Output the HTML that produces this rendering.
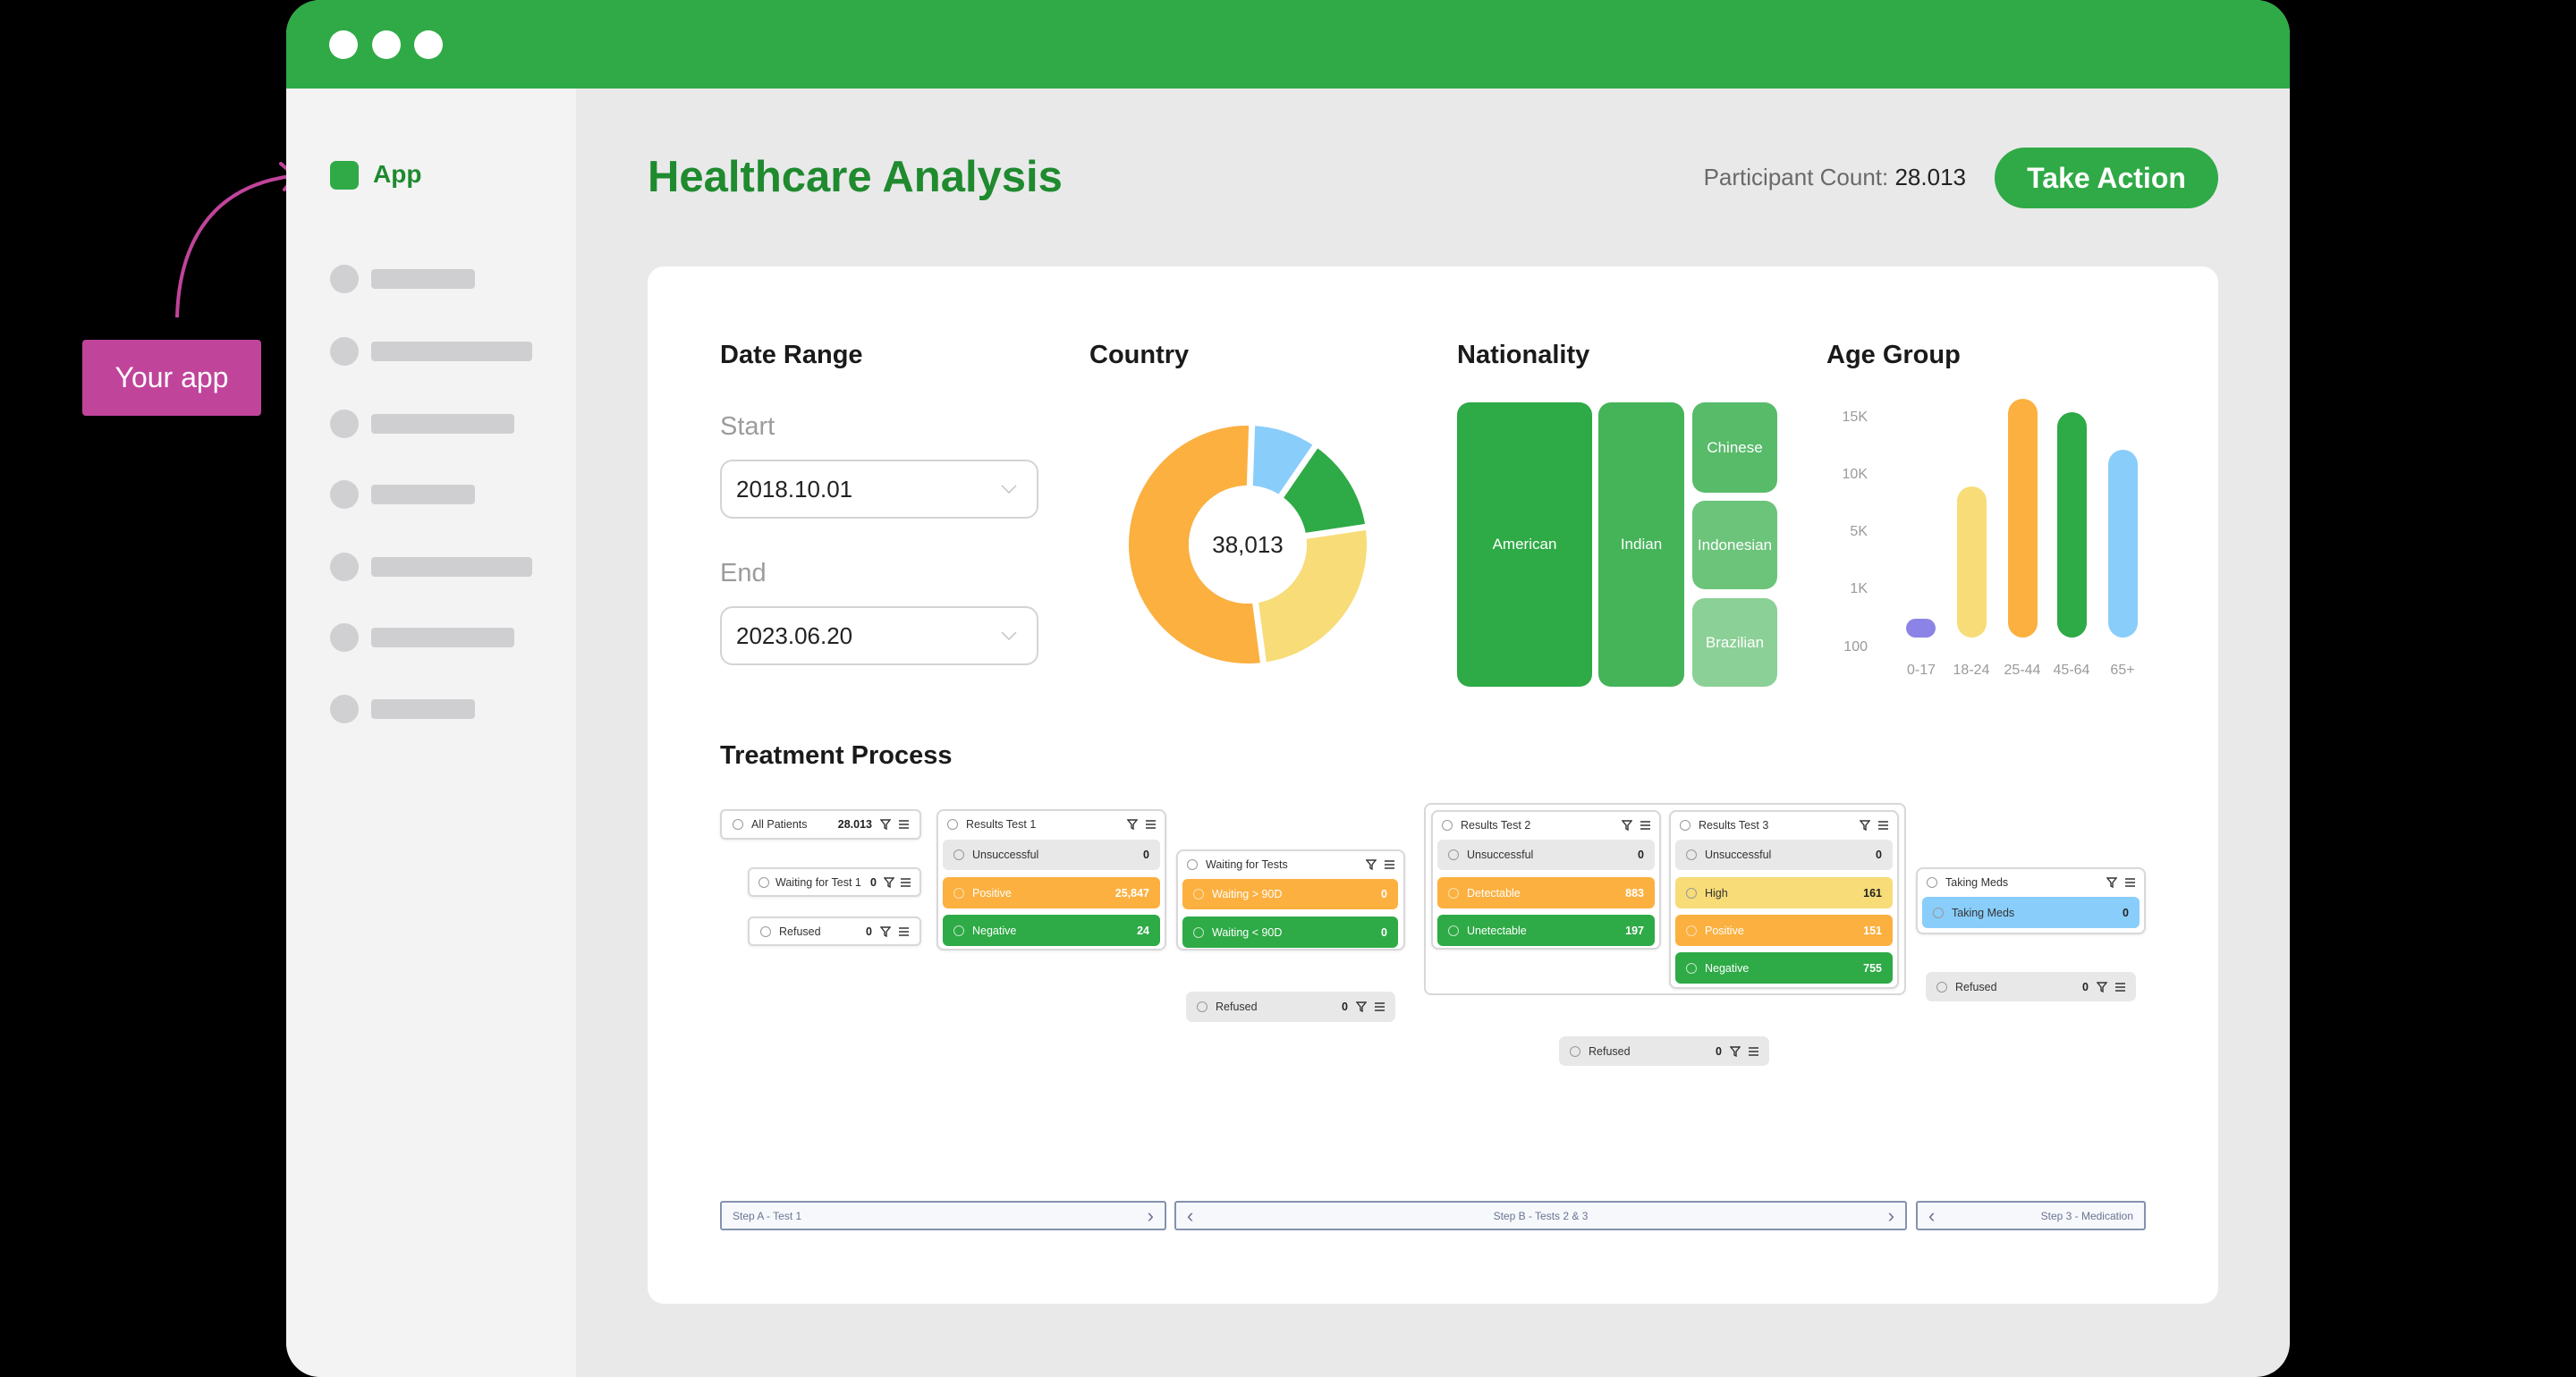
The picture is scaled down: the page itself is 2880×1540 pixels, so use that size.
<!DOCTYPE html>
<html><head><meta charset="utf-8">
<style>
*{margin:0;padding:0}
body{width:2880px;height:1540px;background:#000;position:relative;overflow:hidden;font-family:"Liberation Sans",sans-serif}
.a{position:absolute}
.win{left:320px;top:0;width:2240px;height:1540px;border-radius:38px;overflow:hidden;background:#e9e9ea}
.hdr{left:0;top:0;width:2240px;height:99px;background:#2faa46}
.dot{width:32px;height:32px;border-radius:50%;background:#fff;top:34px}
.side{left:0;top:99px;width:324px;height:1500px;background:#f3f3f4}
.sc{width:32px;height:32px;border-radius:50%;background:#d0d0d2;left:49px}
.sb{height:22px;border-radius:4px;background:#cfcfd1;left:95px}
h3{position:absolute;font-size:29px;font-weight:bold;color:#1a1a1a}
.lbl{position:absolute;font-size:29px;color:#9c9c9c}
.inp{position:absolute;left:805px;width:356px;height:66px;border:2px solid #d4d4d4;border-radius:14px;box-sizing:border-box;background:#fff;font-size:26px;color:#222;line-height:62px;padding-left:16px}
.inp svg{position:absolute;right:22px;top:26px}
.tm{position:absolute;border-radius:14px;color:#fff;font-size:17px;display:flex;align-items:center;justify-content:center}
.yl{position:absolute;font-size:16px;color:#9a9a9a;text-align:right;width:60px;left:2028px}
.xl{position:absolute;font-size:16px;color:#9a9a9a;text-align:center;width:70px;top:741px}
.bar{position:absolute;width:33px;border-radius:17px}
.box{position:absolute;background:#fff;border:2px solid #d8d8d8;border-radius:8px;box-sizing:border-box;box-shadow:0 1px 3px rgba(0,0,0,.08)}
.r{position:absolute;display:flex;align-items:center;box-sizing:border-box;padding:0 12px 0 12px;border-radius:6px;font-size:12.5px;color:#333}
.r .c{width:10px;height:10px;border:1.5px solid #999;border-radius:50%;flex:none}
.r .t{flex:1;margin-left:9px;white-space:nowrap}
.r b{font-size:12.5px;color:#222;margin-left:6px}
.r svg{margin-left:9px;flex:none}
.g{background:#e8e8e8}
.o{background:#fbb040;color:#fff}.o b{color:#fff}.o .c{border-color:#fde0b0}
.gr{background:#2eaa46;color:#fff}.gr b{color:#fff}.gr .c{border-color:#bfe6c6}
.y{background:#f7dc78}
.bl{background:#89cdfb}
.step{position:absolute;top:1343px;height:33px;border:2px solid #8592ae;border-radius:3px;box-sizing:border-box;background:#f6f8fc;font-size:12px;color:#6a7490;display:flex;align-items:center;padding:0 12px}
.step .ch{font-size:22px;line-height:20px}
</style></head><body>

<div class="a" style="left:92px;top:380px;width:200px;height:85px;background:#c0449a;border-radius:4px;color:#fff;font-size:32px;display:flex;align-items:center;justify-content:center">Your app</div>
<svg class="a" style="left:0;top:0" width="400" height="400"><path d="M198 355 C200 280 230 210 325 197" fill="none" stroke="#c0449a" stroke-width="4"/><path d="M314 183 L330 197 L318 212" fill="none" stroke="#c0449a" stroke-width="4" stroke-linecap="round"/></svg>

<div class="a win">
 <div class="a hdr"></div>
 <div class="a dot" style="left:48px"></div><div class="a dot" style="left:96px"></div><div class="a dot" style="left:143px"></div>
 <div class="a side">
  <div class="a" style="left:49px;top:81px;width:32px;height:32px;border-radius:7px;background:#2faa46"></div>
  <div class="a" style="left:97px;top:80px;font-size:28px;font-weight:bold;color:#1f8a2e">App</div>
  <div class="a sc" style="top:197px"></div><div class="a sb" style="top:202px;width:116px"></div>
  <div class="a sc" style="top:278px"></div><div class="a sb" style="top:283px;width:180px"></div>
  <div class="a sc" style="top:359px"></div><div class="a sb" style="top:364px;width:160px"></div>
  <div class="a sc" style="top:438px"></div><div class="a sb" style="top:443px;width:116px"></div>
  <div class="a sc" style="top:519px"></div><div class="a sb" style="top:524px;width:180px"></div>
  <div class="a sc" style="top:598px"></div><div class="a sb" style="top:603px;width:160px"></div>
  <div class="a sc" style="top:678px"></div><div class="a sb" style="top:683px;width:116px"></div>
 </div>
</div>

<div class="a" style="left:724px;top:170px;font-size:49px;font-weight:bold;color:#1f8a2e">Healthcare Analysis</div>
<div class="a" style="left:1880px;top:183px;width:318px;text-align:right;font-size:26px;color:#6a6a6a">Participant Count: <span style="color:#222">28.013</span></div>
<div class="a" style="left:2230px;top:165px;width:250px;height:68px;border-radius:34px;background:#2faa46;color:#fff;font-size:32px;font-weight:bold;display:flex;align-items:center;justify-content:center">Take Action</div>

<div class="a" style="left:724px;top:298px;width:1756px;height:1160px;background:#fff;border-radius:18px"></div>

<h3 style="left:805px;top:381px">Date Range</h3>
<h3 style="left:1218px;top:381px">Country</h3>
<h3 style="left:1629px;top:381px">Nationality</h3>
<h3 style="left:2042px;top:381px">Age Group</h3>

<div class="lbl" style="left:805px;top:461px">Start</div>
<div class="inp" style="top:514px">2018.10.01<svg width="18" height="10"><path d="M1 1l8 8 8-8" fill="none" stroke="#c4c4c4" stroke-width="1.5"/></svg></div>
<div class="lbl" style="left:805px;top:625px">End</div>
<div class="inp" style="top:678px">2023.06.20<svg width="18" height="10"><path d="M1 1l8 8 8-8" fill="none" stroke="#c4c4c4" stroke-width="1.5"/></svg></div>

<svg class="a" style="left:1255px;top:469px" width="280" height="280">
 <path d="M144.64 7.08 A133 133 0 0 1 215.33 30.39 L177.38 85.61 A66 66 0 0 0 142.30 74.04Z" fill="#89cdfb"/>
 <path d="M215.33 30.39 A133 133 0 0 1 271.54 120.34 L205.28 130.25 A66 66 0 0 0 177.38 85.61Z" fill="#2eaa46"/>
 <path d="M271.54 120.34 A133 133 0 0 1 157.36 271.86 L148.61 205.43 A66 66 0 0 0 205.28 130.25Z" fill="#f7dc78"/>
 <path d="M157.36 271.86 A133 133 0 1 1 144.64 7.08 L142.30 74.04 A66 66 0 1 0 148.61 205.43Z" fill="#fbb040"/>
 <g stroke="#fff" stroke-width="7">
  <line x1="140" y1="140" x2="144.9" y2="0"/><line x1="140" y1="140" x2="219.3" y2="24.6"/>
  <line x1="140" y1="140" x2="278.5" y2="119.4"/><line x1="140" y1="140" x2="158.3" y2="278.8"/>
 </g>
 <circle cx="140" cy="140" r="66" fill="#fff"/>
 <text x="140" y="149" text-anchor="middle" font-size="26" fill="#222" font-family="Liberation Sans">38,013</text>
</svg>

<div class="tm" style="left:1629px;top:450px;width:151px;height:318px;background:#2eaa46">American</div>
<div class="tm" style="left:1787px;top:450px;width:96px;height:318px;background:#45b458">Indian</div>
<div class="tm" style="left:1892px;top:450px;width:95px;height:101px;background:#58bb6a">Chinese</div>
<div class="tm" style="left:1892px;top:560px;width:95px;height:99px;background:#6cc47b">Indonesian</div>
<div class="tm" style="left:1892px;top:669px;width:95px;height:99px;background:#8bd096">Brazilian</div>

<div class="yl" style="top:458px">15K</div>
<div class="yl" style="top:522px">10K</div>
<div class="yl" style="top:586px">5K</div>
<div class="yl" style="top:650px">1K</div>
<div class="yl" style="top:715px">100</div>
<div class="bar" style="left:2131px;top:692px;height:21px;background:#8b83e6"></div>
<div class="bar" style="left:2188px;top:544px;height:169px;background:#f7dc78"></div>
<div class="bar" style="left:2245px;top:446px;height:267px;background:#fbb040"></div>
<div class="bar" style="left:2300px;top:461px;height:252px;background:#2eaa46"></div>
<div class="bar" style="left:2357px;top:503px;height:210px;background:#89cdfb"></div>
<div class="xl" style="left:2113px">0-17</div>
<div class="xl" style="left:2169px">18-24</div>
<div class="xl" style="left:2226px">25-44</div>
<div class="xl" style="left:2281px">45-64</div>
<div class="xl" style="left:2338px">65+</div>

<h3 style="left:805px;top:829px">Treatment Process</h3>

<div class="a" style="left:1592px;top:898px;width:539px;height:215px;border:2px solid #d8d8d8;border-radius:8px;box-sizing:border-box"></div>

<div class="box r" style="left:805px;top:905px;width:225px;height:34px"><i class="c"></i><span class="t">All Patients</span><b>28.013</b><svg width="12" height="12"><path d="M1 1h10L7 6v5L5 10V6z" fill="none" stroke="#333" stroke-width="1.4"/></svg><svg width="11" height="10"><path d="M0 1h11M0 5h11M0 9h11" stroke="#333" stroke-width="1.4"/></svg></div>
<div class="box r" style="left:836px;top:970px;width:194px;height:33px;padding:0 10px"><i class="c"></i><span class="t" style="margin-left:7px">Waiting for Test 1</span><b>0</b><svg width="12" height="12" style="margin-left:8px"><path d="M1 1h10L7 6v5L5 10V6z" fill="none" stroke="#333" stroke-width="1.4"/></svg><svg width="11" height="10" style="margin-left:7px"><path d="M0 1h11M0 5h11M0 9h11" stroke="#333" stroke-width="1.4"/></svg></div>
<div class="box r" style="left:836px;top:1025px;width:194px;height:33px"><i class="c"></i><span class="t">Refused</span><b>0</b><svg width="12" height="12"><path d="M1 1h10L7 6v5L5 10V6z" fill="none" stroke="#333" stroke-width="1.4"/></svg><svg width="11" height="10"><path d="M0 1h11M0 5h11M0 9h11" stroke="#333" stroke-width="1.4"/></svg></div>

<div class="box" style="left:1047px;top:905px;width:257px;height:158px"></div>
<div class="r" style="left:1047px;top:905px;width:257px;height:34px"><i class="c"></i><span class="t">Results Test 1</span><svg width="12" height="12"><path d="M1 1h10L7 6v5L5 10V6z" fill="none" stroke="#333" stroke-width="1.4"/></svg><svg width="11" height="10"><path d="M0 1h11M0 5h11M0 9h11" stroke="#333" stroke-width="1.4"/></svg></div>
<div class="r g" style="left:1054px;top:939px;width:243px;height:34px"><i class="c"></i><span class="t">Unsuccessful</span><b>0</b></div>
<div class="r o" style="left:1054px;top:981px;width:243px;height:35px"><i class="c"></i><span class="t">Positive</span><b>25,847</b></div>
<div class="r gr" style="left:1054px;top:1023px;width:243px;height:35px"><i class="c"></i><span class="t">Negative</span><b>24</b></div>

<div class="box" style="left:1315px;top:950px;width:256px;height:113px"></div>
<div class="r" style="left:1315px;top:950px;width:256px;height:33px"><i class="c"></i><span class="t">Waiting for Tests</span><svg width="12" height="12"><path d="M1 1h10L7 6v5L5 10V6z" fill="none" stroke="#333" stroke-width="1.4"/></svg><svg width="11" height="10"><path d="M0 1h11M0 5h11M0 9h11" stroke="#333" stroke-width="1.4"/></svg></div>
<div class="r o" style="left:1322px;top:983px;width:241px;height:34px"><i class="c"></i><span class="t">Waiting &gt; 90D</span><b>0</b></div>
<div class="r gr" style="left:1322px;top:1025px;width:241px;height:35px"><i class="c"></i><span class="t">Waiting &lt; 90D</span><b>0</b></div>
<div class="r g" style="left:1326px;top:1109px;width:234px;height:34px;border-radius:7px"><i class="c"></i><span class="t">Refused</span><b>0</b><svg width="12" height="12"><path d="M1 1h10L7 6v5L5 10V6z" fill="none" stroke="#333" stroke-width="1.4"/></svg><svg width="11" height="10"><path d="M0 1h11M0 5h11M0 9h11" stroke="#333" stroke-width="1.4"/></svg></div>

<div class="box" style="left:1600px;top:906px;width:257px;height:156px"></div>
<div class="r" style="left:1600px;top:906px;width:257px;height:33px"><i class="c"></i><span class="t">Results Test 2</span><svg width="12" height="12"><path d="M1 1h10L7 6v5L5 10V6z" fill="none" stroke="#333" stroke-width="1.4"/></svg><svg width="11" height="10"><path d="M0 1h11M0 5h11M0 9h11" stroke="#333" stroke-width="1.4"/></svg></div>
<div class="r g" style="left:1607px;top:939px;width:243px;height:34px"><i class="c"></i><span class="t">Unsuccessful</span><b>0</b></div>
<div class="r o" style="left:1607px;top:981px;width:243px;height:35px"><i class="c"></i><span class="t">Detectable</span><b>883</b></div>
<div class="r gr" style="left:1607px;top:1023px;width:243px;height:35px"><i class="c"></i><span class="t">Unetectable</span><b>197</b></div>

<div class="box" style="left:1866px;top:906px;width:257px;height:200px"></div>
<div class="r" style="left:1866px;top:906px;width:257px;height:33px"><i class="c"></i><span class="t">Results Test 3</span><svg width="12" height="12"><path d="M1 1h10L7 6v5L5 10V6z" fill="none" stroke="#333" stroke-width="1.4"/></svg><svg width="11" height="10"><path d="M0 1h11M0 5h11M0 9h11" stroke="#333" stroke-width="1.4"/></svg></div>
<div class="r g" style="left:1873px;top:939px;width:243px;height:34px"><i class="c"></i><span class="t">Unsuccessful</span><b>0</b></div>
<div class="r y" style="left:1873px;top:981px;width:243px;height:35px"><i class="c"></i><span class="t">High</span><b>161</b></div>
<div class="r o" style="left:1873px;top:1023px;width:243px;height:35px"><i class="c"></i><span class="t">Positive</span><b>151</b></div>
<div class="r gr" style="left:1873px;top:1065px;width:243px;height:35px"><i class="c"></i><span class="t">Negative</span><b>755</b></div>

<div class="r g" style="left:1743px;top:1159px;width:235px;height:33px;border-radius:7px"><i class="c"></i><span class="t">Refused</span><b>0</b><svg width="12" height="12"><path d="M1 1h10L7 6v5L5 10V6z" fill="none" stroke="#333" stroke-width="1.4"/></svg><svg width="11" height="10"><path d="M0 1h11M0 5h11M0 9h11" stroke="#333" stroke-width="1.4"/></svg></div>

<div class="box" style="left:2142px;top:970px;width:257px;height:75px"></div>
<div class="r" style="left:2142px;top:970px;width:257px;height:33px"><i class="c"></i><span class="t">Taking Meds</span><svg width="12" height="12"><path d="M1 1h10L7 6v5L5 10V6z" fill="none" stroke="#333" stroke-width="1.4"/></svg><svg width="11" height="10"><path d="M0 1h11M0 5h11M0 9h11" stroke="#333" stroke-width="1.4"/></svg></div>
<div class="r bl" style="left:2149px;top:1003px;width:243px;height:35px"><i class="c"></i><span class="t">Taking Meds</span><b>0</b></div>
<div class="r g" style="left:2153px;top:1087px;width:235px;height:33px;border-radius:7px"><i class="c"></i><span class="t">Refused</span><b>0</b><svg width="12" height="12"><path d="M1 1h10L7 6v5L5 10V6z" fill="none" stroke="#333" stroke-width="1.4"/></svg><svg width="11" height="10"><path d="M0 1h11M0 5h11M0 9h11" stroke="#333" stroke-width="1.4"/></svg></div>

<div class="step" style="left:805px;width:499px"><span style="flex:1">Step A - Test 1</span><span class="ch">&#x203A;</span></div>
<div class="step" style="left:1313px;width:819px"><span class="ch">&#x2039;</span><span style="flex:1;text-align:center">Step B - Tests 2 &amp; 3</span><span class="ch">&#x203A;</span></div>
<div class="step" style="left:2142px;width:257px"><span class="ch">&#x2039;</span><span style="flex:1;text-align:right">Step 3 - Medication</span></div>

</body></html>
